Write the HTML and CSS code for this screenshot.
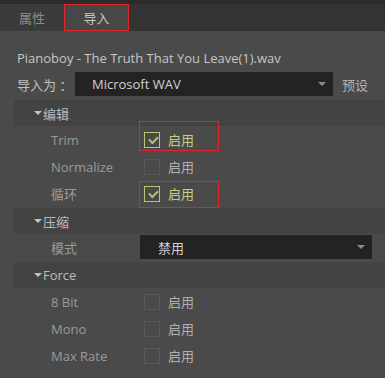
FILE: index.html
```html
<!DOCTYPE html>
<html lang="zh">

<head>
    <meta charset="UTF-8">
    <meta name="viewport" content="width=device-width, initial-scale=1.0">
    <title>导入</title>
    <link rel="stylesheet" href="styles.css">
</head>

<body>
    <!-- Tabs -->
    <div class="tab-bar">
        <div class="tab">属性</div>
        <div class="tab active">导入</div>
    </div>

    <div class="panel">
        <div class="file-name">Pianoboy - The Truth That You Leave(1).wav</div>

        <div class="import-row">
            <span class="import-label">导入为 ：</span>
            <div class="select select-import">
                <span>Microsoft WAV</span>
                <span class="arrow"></span>
            </div>
            <span class="preset">预设</span>
        </div>

        <!-- 编辑 -->
        <div class="section">
            <div class="section-header"><span class="caret"></span>编辑</div>
            <div class="row">
                <span class="row-label">Trim</span>
                <div class="row-value">
                    <span class="checkbox checked"></span>
                    <span class="check-text on">启用</span>
                    <span class="mark mark-top"></span>
                </div>
            </div>
            <div class="row">
                <span class="row-label">Normalize</span>
                <div class="row-value">
                    <span class="checkbox"></span>
                    <span class="check-text">启用</span>
                </div>
            </div>
            <div class="row">
                <span class="row-label">循环</span>
                <div class="row-value">
                    <span class="checkbox checked"></span>
                    <span class="check-text on">启用</span>
                    <span class="mark mark-bottom"></span>
                </div>
            </div>
        </div>

        <!-- 压缩 -->
        <div class="section">
            <div class="section-header"><span class="caret"></span>压缩</div>
            <div class="row">
                <span class="row-label">模式</span>
                <div class="select select-mode">
                    <span>禁用</span>
                    <span class="arrow"></span>
                </div>
            </div>
        </div>

        <!-- Force -->
        <div class="section">
            <div class="section-header"><span class="caret"></span>Force</div>
            <div class="row">
                <span class="row-label">8 Bit</span>
                <div class="row-value">
                    <span class="checkbox"></span>
                    <span class="check-text">启用</span>
                </div>
            </div>
            <div class="row">
                <span class="row-label">Mono</span>
                <div class="row-value">
                    <span class="checkbox"></span>
                    <span class="check-text">启用</span>
                </div>
            </div>
            <div class="row">
                <span class="row-label">Max Rate</span>
                <div class="row-value">
                    <span class="checkbox"></span>
                    <span class="check-text">启用</span>
                </div>
            </div>
        </div>
    </div>
</body>

</html>
```
FILE: styles.css
```css
/* Global */

* {
    box-sizing: border-box;
    margin: 0;
    padding: 0;
}

body {
    background-color: #4a4a4a;
    font-family: "Open Sans", "Noto Sans CJK SC", sans-serif;
    font-size: 13px;
    color: #c4c4c4;
    width: 385px;
    height: 378px;
    overflow: hidden;
}

/* Tabs */

.tab-bar {
    display: flex;
    background-color: #333333;
    border-top: 4px solid #2b2b2b;
    height: 31px;
}

.tab {
    width: 64px;
    display: flex;
    align-items: center;
    justify-content: center;
    background-color: #3b3b3b;
    color: #8c8c8c;
}

.tab.active {
    width: 65px;
    background-color: #474747;
    color: #c8c8c8;
    outline: 1px solid #e0262b;
    outline-offset: -1px;
}

/* Panel */

.panel {
    padding-top: 17px;
}

.file-name {
    padding-left: 17px;
    line-height: 20px;
    color: #c6c6c6;
}

.import-row {
    display: flex;
    align-items: center;
    padding-left: 17px;
    margin: 4px 0;
}

.import-label {
    width: 58px;
    color: #c0c0c0;
    white-space: nowrap;
}

.preset {
    margin-left: 9px;
    color: #b4b4b4;
}

.select {
    height: 24px;
    background-color: #232323;
    color: #d2d2d2;
    display: flex;
    align-items: center;
    justify-content: space-between;
    padding: 0 7px 0 17px;
}

.select-import {
    width: 258px;
}

.arrow {
    width: 0;
    height: 0;
    border-left: 4px solid transparent;
    border-right: 4px solid transparent;
    border-top: 4px solid #8c8c8c;
}

/* Sections */

.section {
    margin-top: 1px;
}

.section-header {
    height: 26px;
    margin-left: 14px;
    background-color: #434343;
    display: flex;
    align-items: center;
    padding-left: 20px;
    color: #bcbcbc;
}

.caret {
    width: 0;
    height: 0;
    border-left: 4px solid transparent;
    border-right: 4px solid transparent;
    border-top: 4px solid #c4c4c4;
    margin-right: 1px;
}

.row {
    height: 27px;
    display: flex;
    align-items: center;
    padding-left: 51px;
}

.row-label {
    width: 89px;
    color: #9a9a9a;
}

.row-value {
    position: relative;
    height: 27px;
    display: flex;
    align-items: center;
    padding-left: 4px;
    gap: 8px;
}

.checkbox {
    width: 16px;
    height: 16px;
    border: 1px solid #585858;
    position: relative;
}

.checkbox.checked {
    border-color: #b6c473;
}

.checkbox.checked::after {
    content: "";
    position: absolute;
    left: 4px;
    top: 3px;
    width: 7px;
    height: 4px;
    border-left: 2px solid #b6c473;
    border-bottom: 2px solid #b6c473;
    transform: rotate(-45deg);
}

.check-text {
    color: #b0b0b0;
}

.check-text.on {
    color: #c2cf82;
}

.select-mode {
    width: 232px;
    padding-left: 18px;
    align-self: flex-start;
    margin-top: 1px;
}

/* Red annotation boxes */

.mark {
    position: absolute;
    left: -1px;
    width: 80px;
    border: 1px solid #e0262b;
}

.mark-top {
    top: -5px;
    height: 30px;
}

.mark-bottom {
    top: 1px;
    height: 27px;
}
```
